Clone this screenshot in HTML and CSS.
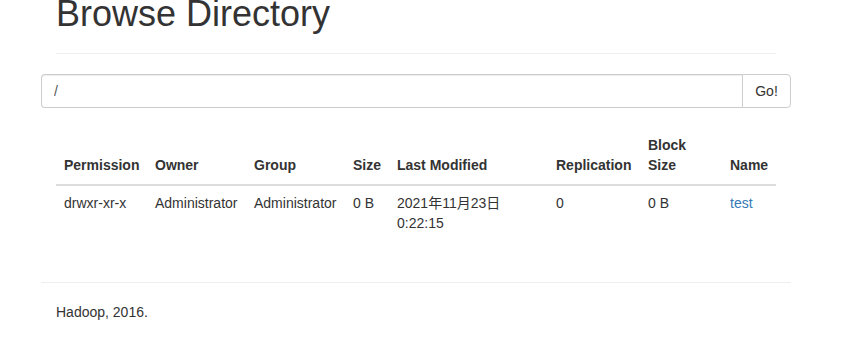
FILE: index.html
```html
<!DOCTYPE html>
<html lang="en">
<head>
    <meta charset="UTF-8">
    <meta name="viewport" content="width=device-width, initial-scale=1.0">
    <title>Browsing HDFS</title>
    <link rel="stylesheet" href="styles.css">
</head>
<body>
    <div class="container">
        <div class="page-header">
            <h1>Browse Directory</h1>
        </div>

        <form class="input-group" onsubmit="return false;">
            <input type="text" class="form-control" id="directory" value="/">
            <button type="submit" class="btn">Go!</button>
        </form>

        <table class="table">
            <colgroup>
                <col class="c-perm">
                <col class="c-owner">
                <col class="c-group">
                <col class="c-size">
                <col class="c-mod">
                <col class="c-repl">
                <col class="c-block">
                <col class="c-name">
            </colgroup>
            <thead>
                <tr>
                    <th>Permission</th>
                    <th>Owner</th>
                    <th>Group</th>
                    <th>Size</th>
                    <th>Last Modified</th>
                    <th>Replication</th>
                    <th>Block Size</th>
                    <th>Name</th>
                </tr>
            </thead>
            <tbody>
                <tr>
                    <td>drwxr-xr-x</td>
                    <td>Administrator</td>
                    <td>Administrator</td>
                    <td>0 B</td>
                    <td>2021年11月23日 0:22:15</td>
                    <td>0</td>
                    <td>0 B</td>
                    <td><a href="#">test</a></td>
                </tr>
            </tbody>
        </table>

        <hr>
        <div class="footer">
            <p>Hadoop, 2016.</p>
        </div>
    </div>
</body>
</html>
```

FILE: styles.css
```css
body {
    margin: 0;
    padding: 0 0 0 41px;
    font-family: "Liberation Sans", Arial, "Noto Sans CJK SC", sans-serif;
    font-size: 14px;
    line-height: 1.42857;
    color: #333;
    background-color: #fff;
}

.container {
    width: 750px;
}

.page-header {
    margin: -6px 15px 20px;
    padding-bottom: 9px;
    border-bottom: 1px solid #eee;
}

h1 {
    margin: 0 0 10px;
    font-size: 36px;
    font-weight: 500;
    line-height: 1.1;
}

.input-group {
    display: flex;
    margin: 0;
}

.form-control {
    flex: 1;
    height: 34px;
    padding: 6px 12px;
    box-sizing: border-box;
    border: 1px solid #ccc;
    border-right: none;
    border-radius: 4px 0 0 4px;
    box-shadow: inset 0 1px 1px rgba(0, 0, 0, 0.075);
    font-family: inherit;
    font-size: 14px;
    color: #555;
    outline: none;
}

.btn {
    width: 49px;
    height: 34px;
    padding: 6px 12px;
    border: 1px solid #ccc;
    border-radius: 0 4px 4px 0;
    background-color: #fff;
    font-family: inherit;
    font-size: 14px;
    color: #333;
    cursor: pointer;
}

.table {
    width: 720px;
    margin: 20px 15px 0;
    border-collapse: collapse;
    table-layout: fixed;
}

.c-perm { width: 91px; }
.c-owner { width: 99px; }
.c-group { width: 99px; }
.c-size { width: 44px; }
.c-mod { width: 159px; }
.c-repl { width: 92px; }
.c-block { width: 82px; }
.c-name { width: 54px; }

.table th,
.table td {
    padding: 8px;
    text-align: left;
    line-height: 1.42857;
}

.table th {
    vertical-align: bottom;
    font-weight: bold;
    border-bottom: 2px solid #ddd;
}

.table td {
    vertical-align: top;
}

.table a {
    color: #337ab7;
    text-decoration: none;
}

hr {
    margin: 40px 0 20px;
    border: 0;
    border-top: 1px solid #eee;
}

.footer p {
    margin: 0 15px;
}
```
